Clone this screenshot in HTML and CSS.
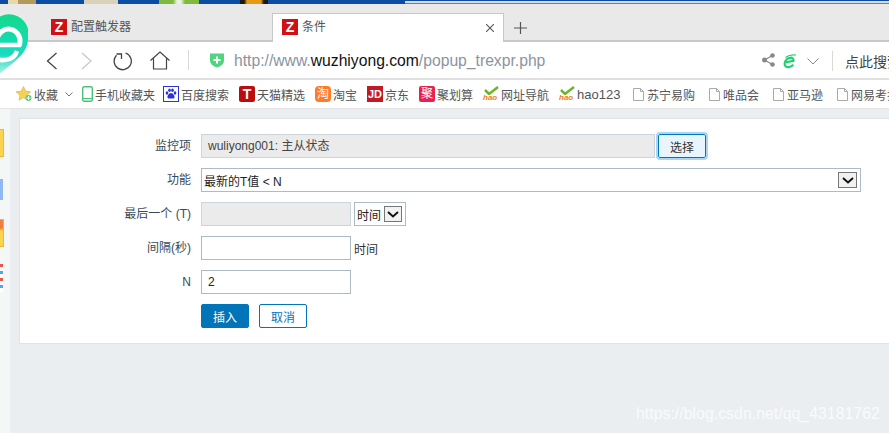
FILE: index.html
```html
<!DOCTYPE html>
<html lang="zh">
<head>
<meta charset="utf-8">
<title>条件</title>
<link rel="stylesheet" href="styles.css">
</head>
<body>
<div class="desktop-strip">
  <span class="ds ds-a"></span><span class="ds ds-a2"></span><span class="ds ds-b"></span><span class="ds ds-c"></span><span class="ds ds-d"></span><span class="ds ds-e"></span>
</div>
<header class="tabbar">
  <div class="tab">
    <span class="z">Z</span><span class="tab-title">配置触发器</span>
  </div>
  <div class="tab active">
    <span class="z">Z</span><span class="tab-title">条件</span>
    <svg class="close" width="8" height="8" viewBox="0 0 8 8"><path d="M0 0l8 8M8 0L0 8" stroke="#555" stroke-width="1.100"/></svg>
  </div>
  <svg class="plus" width="13" height="12" viewBox="0 0 13 12"><path d="M6.500 0v12M0 6h13" stroke="#555" stroke-width="1.200"/></svg>
</header>
<nav class="addr">
  <svg class="nav-i back" width="14" height="18" viewBox="0 0 14 18"><path d="M11.500 1L2.500 9l9 8" fill="none" stroke="#444" stroke-width="1.300"/></svg>
  <svg class="nav-i fwd" width="14" height="18" viewBox="0 0 14 18"><path d="M3 1l9 8-9 8" fill="none" stroke="#c8c8c8" stroke-width="1.300"/></svg>
  <svg class="nav-i reload" width="20" height="20" viewBox="0 0 20 20"><path d="M12.500 2A8.600 8.600 0 1 1 3.500 4.200" fill="none" stroke="#444" stroke-width="1.300"/><path d="M3.500 3H8.500V8" fill="none" stroke="#444" stroke-width="1.300"/></svg>
  <svg class="nav-i home" width="20" height="19" viewBox="0 0 20 19"><path d="M0.500 9.500L10 1l9.500 8.500M3.500 7.500V18h13V7.500" fill="none" stroke="#444" stroke-width="1.200"/></svg>
  <span class="sep"></span>
  <svg class="shield" width="14" height="16" viewBox="0 0 14 16"><path d="M0 1.500h14v7c0 3.500-3.500 6-7 7-3.500-1-7-3.500-7-7z" fill="#4fd47f"/><path d="M7 4.500v7M3.500 8h7" stroke="#fff" stroke-width="2"/></svg>
  <span class="url">http://www.<b>wuzhiyong.com</b>/popup_trexpr.php</span>
  <svg class="share" width="13" height="14" viewBox="0 0 13 14"><path d="M10.500 2.500L2.500 7l8 4.500" stroke="#888" stroke-width="1.300" fill="none"/><circle cx="10.500" cy="2.500" r="2.300" fill="#888"/><circle cx="2.500" cy="7" r="2.500" fill="#888"/><circle cx="10.500" cy="11.500" r="2.300" fill="#888"/></svg>
  <svg class="ie" width="15" height="15" viewBox="0 0 15 15"><path d="M2.600 8.500L11.500 6.800C11.800 4.500 10 3.400 8 3.800 5 4.300 2.700 7 2.600 9.800 2.500 12.500 5 13.700 7.500 13 9 12.600 10.300 11.800 11.200 10.800" fill="none" stroke="#1fcf70" stroke-width="2.200"/><path d="M3.500 3.500C6 1.500 10 .6 14 1" fill="none" stroke="#1fcf70" stroke-width="1.200"/></svg>
  <svg class="chev" width="12" height="7" viewBox="0 0 12 7"><path d="M0.500 0.500L6 6l5.500-5.500" fill="none" stroke="#888"/></svg>
  <span class="sep sep2"></span>
  <span class="search">点此搜索</span>
</nav>
<nav class="bookmarks">
  <span class="bm bm-fav"><svg width="16" height="16" viewBox="0 0 16 16"><path d="M7.500 0.500l2.200 4.700 5 .6-3.700 3.400 1 5-4.500-2.500-4.500 2.500 1-5L0 5.800l5.200-.6z" fill="#f7d154" stroke="#d9ad3c" stroke-width=".6"/><circle cx="12.500" cy="12" r="3" fill="#5cc878"/><path d="M12.500 10v4M10.500 12h4" stroke="#fff"/></svg>收藏<svg class="mini" width="8" height="5" viewBox="0 0 8 5"><path d="M.5.500L4 4 7.500.500" fill="none" stroke="#777"/></svg></span>
  <span class="bm bm-phone"><svg width="11" height="16" viewBox="0 0 11 16"><rect x=".7" y=".7" width="9.600" height="14.600" rx="1.500" fill="#fff" stroke="#4dc07a" stroke-width="1.400"/><path d="M1 12.500h9" stroke="#4dc07a"/></svg>手机收藏夹</span>
  <span class="bm bm-baidu"><svg width="16" height="16" viewBox="0 0 16 16"><rect x=".5" y=".5" width="15" height="15" fill="#fff" stroke="#2a32d8"/><ellipse cx="4" cy="7" rx="1.300" ry="1.800" fill="#2a32d8"/><ellipse cx="6.500" cy="4.300" rx="1.300" ry="1.700" fill="#2a32d8"/><ellipse cx="9.500" cy="4.300" rx="1.300" ry="1.700" fill="#2a32d8"/><ellipse cx="12" cy="7" rx="1.300" ry="1.800" fill="#2a32d8"/><path d="M8 7c2 0 4 3 3.500 4.500S9 12.500 8 12.500s-3 .5-3.500-1S6 7 8 7z" fill="#2a32d8"/></svg>百度搜索</span>
  <span class="bm bm-t"><span class="ico-t">T</span>天猫精选</span>
  <span class="bm bm-tb"><span class="ico-tb">淘</span>淘宝</span>
  <span class="bm bm-jd"><span class="ico-jd">JD</span>京东</span>
  <span class="bm bm-ju"><span class="ico-ju">聚</span>聚划算</span>
  <span class="bm bm-hao"><span class="hao"><svg width="16" height="9" viewBox="0 0 16 9"><path d="M1 4l4 4 9-7" fill="none" stroke="#6bb52c" stroke-width="2.500"/></svg><i>hao</i></span>网址导航</span>
  <span class="bm bm-123"><span class="hao"><svg width="16" height="9" viewBox="0 0 16 9"><path d="M1 4l4 4 9-7" fill="none" stroke="#6bb52c" stroke-width="2.500"/></svg><i>hao</i></span>hao123</span>
  <span class="bm bm-doc d1"><svg class="doc" width="11" height="13" viewBox="0 0 11 13"><path d="M.5.500h7l3 3v9H.5zM7.500.500v3h3" fill="#fff" stroke="#aaa"/></svg>苏宁易购</span>
  <span class="bm bm-doc d2"><svg class="doc" width="11" height="13" viewBox="0 0 11 13"><path d="M.5.500h7l3 3v9H.5zM7.500.500v3h3" fill="#fff" stroke="#aaa"/></svg>唯品会</span>
  <span class="bm bm-doc d2"><svg class="doc" width="11" height="13" viewBox="0 0 11 13"><path d="M.5.500h7l3 3v9H.5zM7.500.500v3h3" fill="#fff" stroke="#aaa"/></svg>亚马逊</span>
  <span class="bm bm-doc"><svg class="doc" width="11" height="13" viewBox="0 0 11 13"><path d="M.5.500h7l3 3v9H.5zM7.500.500v3h3" fill="#fff" stroke="#aaa"/></svg>网易考拉</span>
</nav>
<div class="main">
  <aside class="side">
    <span class="s-a"></span><span class="s-b"></span><span class="s-c"></span><span class="s-d"></span>
  </aside>
  <div class="content">
    <section class="card">
      <form class="form">
        <label class="lab">监控项</label>
        <div class="ctl"><div class="ro wide">wuliyong001: 主从状态</div><button type="button" class="pick">选择</button></div>
        <label class="lab">功能</label>
        <div class="ctl"><div class="sel big"><span>最新的T值 &lt; N</span><span class="arrow"><svg width="12" height="7" viewBox="0 0 12 7"><path d="M1 1l5 4.500L11 1" fill="none" stroke="#111" stroke-width="2"/></svg></span></div></div>
        <label class="lab">最后一个 (T)</label>
        <div class="ctl"><div class="ro field"></div><div class="sel small"><span>时间</span><span class="arrow"><svg width="12" height="7" viewBox="0 0 12 7"><path d="M1 1l5 4.500L11 1" fill="none" stroke="#111" stroke-width="2"/></svg></span></div></div>
        <label class="lab">间隔(秒)</label>
        <div class="ctl"><div class="inp field"></div><span class="unit">时间</span></div>
        <label class="lab">N</label>
        <div class="ctl"><div class="inp field">2</div></div>
        <span></span>
        <div class="ctl btns"><button type="button" class="primary">插入</button><button type="button" class="ghost">取消</button></div>
      </form>
    </section>
    <div class="wm">https://blog.csdn.net/qq_43181762</div>
  </div>
</div>
<div class="logo"><svg width="28" height="68" viewBox="0 0 28 68"><defs><linearGradient id="lg" x1="0" y1="0" x2="0" y2="1"><stop offset="0" stop-color="#12d98a"/><stop offset=".6" stop-color="#16dcc0"/><stop offset="1" stop-color="#e8fbf4"/></linearGradient></defs><path d="M-10 15a17 17 0 0 1 38 10c0 12-10 20-20 28l-18 14z" fill="url(#lg)"/><path d="M-3 27a11.500 12 0 1 1 22 5" fill="none" stroke="#fff" stroke-width="5"/><path d="M-8 31h29M17 37a14 12 0 0 1-25 4" fill="none" stroke="#fff" stroke-width="4.500"/></svg></div>
</body>
</html>
```
FILE: styles.css
```css
* { box-sizing: border-box; }
html, body { margin: 0; padding: 0; }
body {
  width: 889px; height: 433px; overflow: hidden; position: relative;
  background: #ebeef0; display: flex; flex-direction: column;
  font-family: "Liberation Sans", "Noto Sans CJK SC", sans-serif; color: #333;
  font-size: 12px;
}
.desktop-strip { height: 4px; background: #0a4da3; display: flex; flex: none; }
.ds { display: block; height: 4px; flex: none; }
.ds-a { width: 10px; margin-left: 8px; background: #e6d9a8; }
.ds-a2 { width: 18px; background: #b39a5c; }
.ds-b { width: 34px; margin-left: 48px; background: #d9d2b8; }
.ds-c { width: 40px; margin-left: 41px; background: linear-gradient(90deg, #7fba3c 0 35%, #e8f2dc 45% 55%, #7fba3c 65%); }
.ds-d { width: 28px; margin-left: 41px; background: linear-gradient(90deg, #1a1a10 0 15%, #e69a12 25% 75%, #1a1a10 85%); }
.ds-e { width: 484px; margin-left: 137px; background: linear-gradient(#0a4da3 0 1px, #d7dadd 1px 3px, #6d7f92 3px); }
.tabbar { height: 38px; flex: none; background: #e9e9e9; border-bottom: 2px solid #c8c8c8; display: flex; position: relative; padding-left: 51px; }
.tab { width: 221px; display: flex; align-items: flex-start; padding-top: 15px; font-size: 12px; height: 36px; }
.tab.active { width: 232px; height: 29px; margin-top: 9px; padding: 5px 0 0 9px; background: #fff; border: 1px solid #c8c8c8; border-bottom: 0; position: relative; }
.z { width: 16px; height: 16px; background: #d40f14; color: #fff; font: bold 14px/16px "Liberation Sans", sans-serif; text-align: center; flex: none; }
.tab-title { margin-left: 4px; font-size: 12px; line-height: 16px; color: #555; }
.close { position: absolute; right: 9px; top: 10px; }
.plus { position: absolute; left: 514px; top: 18px; }
.addr { height: 38px; flex: none; background: #fff; border-bottom: 2px solid #e0e0e0; display: flex; align-items: center; position: relative; }
.nav-i { position: absolute; }
.back { left: 45px; top: 10px; }
.fwd { left: 79px; top: 10px; }
.reload { left: 113px; top: 9px; }
.home { left: 150px; top: 9px; }
.sep { width: 1px; height: 20px; background: #d9d9d9; margin-left: 188px; flex: none; }
.shield { margin-left: 21px; flex: none; }
.url { margin-left: 10px; font-size: 15.7px; color: #8a94a0; white-space: nowrap; position: relative; top: 1px; }
.url b { font-weight: normal; color: #111; }
.share { position: absolute; left: 762px; top: 11px; }
.ie { position: absolute; left: 782px; top: 12px; }
.chev { position: absolute; left: 807px; top: 16px; }
.sep2 { position: absolute; left: 832px; top: 9px; margin: 0; }
.search { position: absolute; left: 845px; top: 9px; font-size: 14px; color: #444; white-space: nowrap; }
.bookmarks { height: 29px; flex: none; background: #fff; border-bottom: 1px solid #e4e4e4; display: flex; align-items: center; white-space: nowrap; font-size: 12px; color: #555; position: relative; overflow: hidden; }
.bm { display: flex; align-items: center; flex: none; }
.bm-fav { margin-left: 16px; width: 66px; }
.mini { margin-left: 7px; }
.bm-fav svg:first-child { margin-right: 2px; }
.bm-phone { width: 81px; }
.bm-phone svg { margin-right: 2px; }
.bm-baidu { width: 76px; }
.bm-baidu svg { margin-right: 2px; }
.bm-t { width: 76px; }
.ico-t { width: 16px; height: 16px; background: #bb0d0d; border-radius: 2px; color: #fff; font: bold 14px/16px "Liberation Sans", sans-serif; text-align: center; margin-right: 2px; }
.bm-tb { width: 52px; }
.ico-tb { width: 16px; height: 16px; background: #ff7a2a; border-radius: 4px; color: #fff; font-size: 12px; line-height: 16px; text-align: center; margin-right: 2px; }
.bm-jd { width: 52px; }
.ico-jd { width: 16px; height: 16px; background: #c01a24; color: #fff; font: bold 11px/16px "Liberation Sans", sans-serif; text-align: center; margin-right: 2px; }
.bm-ju { width: 64px; }
.ico-ju { width: 16px; height: 16px; background: #e8214f; border-radius: 2px; color: #fff; font-size: 12px; line-height: 16px; text-align: center; margin-right: 2px; }
.bm-hao { width: 76px; }
.hao { width: 17px; height: 16px; position: relative; margin-right: 1px; display: block; flex: none; }
.hao svg { position: absolute; left: 1px; top: 0; }
.hao i { position: absolute; left: 0; top: 7px; font: italic bold 8px/9px "Liberation Sans", sans-serif; color: #f07c1e; }
.bm-123 { width: 74px; font-size: 13px; }
.doc { margin-right: 3px; }
.bm-doc { color: #555; }
.d1 { width: 76px; }
.d2 { width: 64px; }
.main { flex: 1; display: flex; min-height: 0; }
.side { width: 10px; flex: none; background: #f5f6f6; position: relative; }
.side span { display: block; position: absolute; left: 0; }
.s-a { top: 20px; width: 4px; height: 28px; background: #fcd44e; border: 1px solid #efb92e; border-left: 0; }
.s-b { top: 70px; width: 3px; height: 21px; background: #8fb9f2; }
.s-c { top: 110px; width: 4px; height: 28px; background: linear-gradient(#ef7f3c 0 8px, #fcd44e 11px); border: 1px solid #efb92e; border-left: 0; }
.s-d { top: 155px; left: 1px; width: 3px; height: 28px; background: repeating-linear-gradient(#e8574a 0 3px, #fff 3px 7px, #52a7e8 7px 10px, #fff 10px 14px); }
.content { flex: 1; padding: 9px 0 0 9px; position: relative; background: #ebeef0; }
.card { height: 226px; background: #fff; border: 1px solid #dfe4e7; border-right: 0; }
.form { display: grid; grid-template-columns: 171px 1fr; column-gap: 10px; row-gap: 10px; padding-top: 15px; grid-auto-rows: 24px; }
.lab { text-align: right; font-size: 12px; line-height: 24px; color: #384a58; white-space: nowrap; }
.ctl { display: flex; align-items: center; }
.ro { background: #ebebeb; border: 1px solid #ccd5db; height: 24px; line-height: 22px; font-size: 12px; color: #444; }
.wide { width: 454px; padding-left: 6px; }
.field { width: 150px; }
.pick { margin-left: 3px; width: 48px; height: 24px; border: 1px solid #0275b8; outline: 2px solid #a9d6f5; outline-offset: 0; border-radius: 2px; background: #e9f5fd; font: 12px "Liberation Sans", "Noto Sans CJK SC", sans-serif; color: #333; padding: 0; }
.sel { border: 1px solid #acbbc4; background: #fff; display: flex; align-items: center; height: 24px; font-size: 12px; color: #222; }
.big { width: 660px; justify-content: space-between; padding: 0 3px 0 2px; }
.small { margin-left: 3px; width: 52px; padding-left: 2px; justify-content: space-between; padding-right: 3px; }
.arrow { width: 19px; height: 16px; background: #f1f1f1; border: 1px solid #777; display: flex; align-items: center; justify-content: center; }
.small .arrow { width: 18px; }
.inp { background: #fff; border: 1px solid #acbbc4; height: 24px; line-height: 22px; padding-left: 6px; color: #222; font-size: 12px; }
.unit { margin-left: 3px; font-size: 12px; color: #333; }
.btns { gap: 10px; }
.btns button { width: 48px; height: 24px; font: 12px "Liberation Sans", "Noto Sans CJK SC", sans-serif; border-radius: 2px; padding: 0; }
.primary { background: #0275b8; color: #fff; border: 1px solid #0275b8; }
.ghost { background: #fff; color: #0275b8; border: 1px solid #0275b8; }
.wm { position: absolute; left: 626px; top: 296px; font-size: 15.9px; color: #fff; opacity: .75; white-space: nowrap; }
.logo { position: absolute; left: 0; top: 14px; }
```
